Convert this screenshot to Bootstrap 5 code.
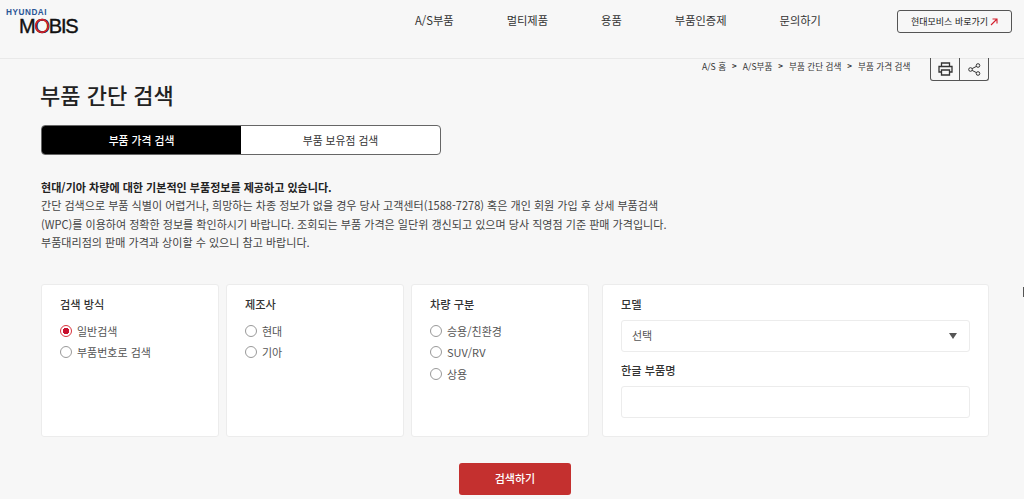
<!DOCTYPE html>
<html lang="ko">
<head>
<meta charset="utf-8">
<title>부품 간단 검색</title>
<link href="https://cdn.jsdelivr.net/npm/bootstrap@5.3.0/dist/css/bootstrap.min.css" rel="stylesheet">
<style>
html,body{height:499px;overflow:hidden}
body{background:#f7f7f7;font-family:"Noto Sans CJK KR","Noto Sans",sans-serif;color:#222;font-size:11px;position:relative}
.topbar{height:59px;border-bottom:1px solid #e9e9e9;padding:0 12px 0 6px}
.logo-wrap{width:409px;height:58px;padding-top:9px;flex:none}
.logo-top{font:700 8.2px/8px "Liberation Sans",sans-serif;color:#2a5596;letter-spacing:.55px;display:block}
.logo-main{font:400 20px/20px "Liberation Sans",sans-serif;color:#111;letter-spacing:-1.2px;display:flex;align-items:center;padding-left:13px;margin-top:-1px;-webkit-text-stroke:.4px #111}
.logo-o{color:#111;position:relative;display:inline-block}
.logo-o svg{position:absolute;left:0;top:2px;width:16px;height:16px}
.mainnav{gap:53px;font-size:11.25px;color:#333;padding-top:12px}
.mainnav a{color:#333;text-decoration:none}
.go-btn{width:115px;height:23px;margin-top:10px;border:1px solid #555;border-radius:3px;background:#f7f7f7;font-size:9px;color:#222;padding:0;display:flex;align-items:center;justify-content:center;gap:2px}
.go-btn svg{width:8px;height:8px}
.pagewrap{padding:19px 35px 0 41px;position:relative}
.crumbs{position:absolute;left:702px;top:-1px;font-size:8.6px;color:#333;gap:6px;height:16px;white-space:nowrap}
.crumb-sep{font-size:8px;font-weight:700}
.tool-box{position:absolute;left:930px;top:-1px;width:59px;height:23px;border:1px solid #555;border-top:0;border-radius:0 0 3px 3px;display:flex}
.tool-box span{flex:1;display:flex;align-items:center;justify-content:center}
.tool-box span+span{border-left:1px solid #555}
.pagetitle{font-size:22px;font-weight:500;line-height:32px;margin:0 0 0 -1px;color:#222}
.tabset{width:400px;height:30px;margin-top:15px;border:1px solid #666;border-radius:4px;background:#fff;overflow:hidden;display:flex}
.tabset a{flex:1;display:flex;align-items:center;justify-content:center;text-decoration:none;font-size:10.8px;color:#333}
.tabset a.on{background:#000;color:#fff;font-weight:500}
.intro{margin:23px 0 0;line-height:18.5px;font-size:11.05px;color:#444}
.intro strong{font-weight:700;color:#222;display:block;margin-bottom:-.5px}
.panels{margin-top:32px;display:grid;grid-template-columns:178px 178px 178px 387px;column-gap:7px;height:153px}
.panel{background:#fff;border:1px solid #ececec;border-radius:3px;padding:11px 18px}
.panel.last{margin-left:6px;width:387px}
.panel-title{font-size:11.2px;font-weight:500;color:#333;line-height:16px;margin-bottom:8.5px}
.choice{display:flex;align-items:center;gap:5px;height:21.5px;margin:0;padding:0;min-height:0;color:#555;font-size:11px}
.choice .form-check-input{width:12px;height:12px;margin:0;float:none;border:1px solid #999;flex:none}
.choice .form-check-input:checked{background-color:#fff;border-color:#d8343d;background-image:radial-gradient(circle,#c8102e 0 3px,#fff 3.5px)}
.choice .form-check-input:focus{box-shadow:none}
.panel.last .panel-title{margin-bottom:8px}
.model-select{height:32px;border:1px solid #ececec;border-radius:3px;font-size:11px;color:#555;padding:0 10px;background-color:#fff;margin-bottom:10px;display:flex;align-items:center;justify-content:space-between}
.caret{width:0;height:0;border-left:4px solid transparent;border-right:4px solid transparent;border-top:6px solid #555;margin-right:2px}
.model-input{height:32px;min-height:32px;border:1px solid #ececec;border-radius:3px;background:#fff;padding:0 10px;font-size:11px;box-shadow:none}
.search-btn{width:112px;height:32px;margin:26px 0 0 418px;background:#c4302f;border:0;border-radius:3px;color:#fff;font-size:11px;font-weight:500;display:block;padding:0}
.edge-mark{position:absolute;right:0;top:287px;width:1px;height:10px;background:#555}
</style>
</head>
<body>
<header class="topbar d-flex align-items-start">
  <div class="logo-wrap">
    <span class="logo-top">HYUNDAI</span>
    <div class="logo-main">M<span class="logo-o">O<svg viewBox="0 0 16 16"><circle cx="8" cy="8" r="6.3" fill="none" stroke="#d3202e" stroke-width="1.7"/></svg></span>BIS</div>
  </div>
  <nav class="mainnav d-flex flex-grow-1">
    <a href="#">A/S부품</a><a href="#">멀티제품</a><a href="#">용품</a><a href="#">부품인증제</a><a href="#">문의하기</a>
  </nav>
  <button class="go-btn btn" type="button">현대모비스 바로가기
    <svg viewBox="0 0 8 8"><path d="M1 7 7 1M2.5 1H7v4.5" fill="none" stroke="#d3202e" stroke-width="1.1"/></svg>
  </button>
</header>
<main class="pagewrap">
  <div class="crumbs d-flex align-items-center"><span>A/S 홈</span><span class="crumb-sep">&gt;</span><span>A/S부품</span><span class="crumb-sep">&gt;</span><span>부품 간단 검색</span><span class="crumb-sep">&gt;</span><span>부품 가격 검색</span></div>
  <div class="tool-box">
    <span><svg width="15" height="14" viewBox="0 0 15 14" fill="none" stroke="#333" stroke-width="1.3"><path d="M3.5 4V1h8v3M3.5 10H1V4.5h13V10h-2.5"/><path d="M3.5 8h8v5h-8z"/></svg></span>
    <span><svg width="13" height="13" viewBox="0 0 13 13" fill="none" stroke="#333" stroke-width="1"><circle cx="10" cy="2.5" r="1.8"/><circle cx="2.5" cy="6.5" r="1.8"/><circle cx="10" cy="10.5" r="1.8"/><path d="M4.1 5.6 8.4 3.4M4.1 7.4l4.3 2.2"/></svg></span>
  </div>
  <h1 class="pagetitle">부품 간단 검색</h1>
  <div class="tabset">
    <a class="on" href="#">부품 가격 검색</a>
    <a href="#">부품 보유점 검색</a>
  </div>
  <p class="intro"><strong>현대/기아 차량에 대한 기본적인 부품정보를 제공하고 있습니다.</strong>
  간단 검색으로 부품 식별이 어렵거나, 희망하는 차종 정보가 없을 경우 당사 고객센터(1588-7278) 혹은 개인 회원 가입 후 상세 부품검색<br>
  (WPC)를 이용하여 정확한 정보를 확인하시기 바랍니다. 조회되는 부품 가격은 일단위 갱신되고 있으며 당사 직영점 기준 판매 가격입니다.<br>
  부품대리점의 판매 가격과 상이할 수 있으니 참고 바랍니다.</p>
  <form>
    <div class="panels">
      <div class="panel">
        <div class="panel-title">검색 방식</div>
        <label class="choice form-check"><input class="form-check-input" type="radio" name="m" checked>일반검색</label>
        <label class="choice form-check"><input class="form-check-input" type="radio" name="m">부품번호로 검색</label>
      </div>
      <div class="panel">
        <div class="panel-title">제조사</div>
        <label class="choice form-check"><input class="form-check-input" type="radio" name="c">현대</label>
        <label class="choice form-check"><input class="form-check-input" type="radio" name="c">기아</label>
      </div>
      <div class="panel">
        <div class="panel-title">차량 구분</div>
        <label class="choice form-check"><input class="form-check-input" type="radio" name="t">승용/친환경</label>
        <label class="choice form-check"><input class="form-check-input" type="radio" name="t">SUV/RV</label>
        <label class="choice form-check"><input class="form-check-input" type="radio" name="t">상용</label>
      </div>
      <div class="panel last">
        <div class="panel-title">모델</div>
        <div class="model-select"><span>선택</span><i class="caret"></i></div>
        <div class="panel-title sub">한글 부품명</div>
        <input class="form-control model-input" type="text" aria-label="한글 부품명">
      </div>
    </div>
    <button class="search-btn btn" type="button">검색하기</button>
  </form>
</main>
<div class="edge-mark"></div>
<script src="https://cdn.jsdelivr.net/npm/bootstrap@5.3.0/dist/js/bootstrap.bundle.min.js"></script>
</body>
</html>
